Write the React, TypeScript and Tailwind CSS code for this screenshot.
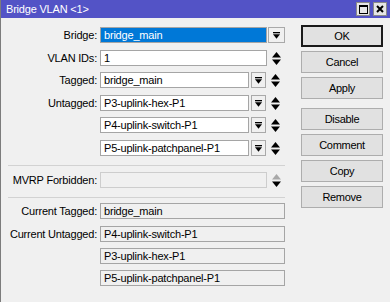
import React from "react";

const font = "font-['Liberation_Sans',Arial,sans-serif] text-[11px] tracking-[-0.2px]";

function DropIcon() {
  return (
    <svg width="7" height="7" viewBox="0 0 7 7" aria-hidden="true">
      <rect x="0" y="0" width="7" height="1.3" fill="#000" />
      <path d="M0 2.2h7L3.5 6.7z" fill="#000" />
    </svg>
  );
}

function UpDown({dim = false}: {dim?: boolean}) {
  return (
    <svg width="9" height="13" viewBox="0 0 9 13" aria-hidden="true" className="ml-[5px] shrink-0">
      <path d="M4.5 0L9 5.5H0z" fill={dim ? "#a8a8a8" : "#000"} />
      <path d="M0 7.5h9L4.5 13z" fill="#000" />
    </svg>
  );
}

function Drop({w = "w-[15px]", ml = "ml-[2px]"}: {w?: string; ml?: string}) {
  return (
    <span className={`${ml} ${w} flex h-[16px] shrink-0 items-center justify-center border border-[#a9a9a9] bg-[#f0f0f0]`}>
      <DropIcon />
    </span>
  );
}

function Row({label, mt, children}: {label?: string; mt: string; children: React.ReactNode}) {
  return (
    <div className={`${mt} flex h-[16px] items-center`}>
      <span className="w-[96px] shrink-0 whitespace-nowrap text-right">{label}</span>
      <div className="ml-[3px] flex items-center">{children}</div>
    </div>
  );
}

function Field({value, w, kind = "edit"}: {value: string; w: string; kind?: "edit" | "selected" | "readonly" | "disabled"}) {
  const look = {
    edit: "border-[#a5a5a5] bg-white text-black",
    selected: "border-[#a5a5a5] bg-[#0078d7] text-white",
    readonly: "border-[#a5a5a5] bg-[#f0f0f0] text-black",
    disabled: "border-[#cdcdcd] bg-[#f0f0f0] text-black",
  }[kind];
  return (
    <div className={`${w} ${look} h-[16px] shrink-0 overflow-hidden whitespace-nowrap border pl-[3px] leading-[14px]`}>
      {value}
    </div>
  );
}

function Sep({mt}: {mt: string}) {
  return <div className={`${mt} ml-[7px] h-px w-[277px] bg-[#d2d2d2]`} />;
}

function Btn({label, mt, primary = false}: {label: string; mt: string; primary?: boolean}) {
  return (
    <div
      className={`${mt} flex h-[22px] items-center justify-center bg-[#e1e1e1] ${
        primary ? "border-2 border-[#1a1a1a]" : "border border-[#adadad]"
      }`}
    >
      {label}
    </div>
  );
}

export default function App() {
  return (
    <div className={`${font} h-[302px] w-[390px] overflow-hidden border-l border-[#7c7c7c] bg-[#f0f0f0] text-black`}>
      <div className="flex h-[18px] items-center justify-between bg-[#5353c6] pl-[5px] pr-[3px]">
        <span className="text-white">Bridge VLAN &lt;1&gt;</span>
        <div className="flex gap-[3px]">
          <span className="flex h-[14px] w-[14px] items-center justify-center border border-[#8a8a8a] bg-[#e6e6e6]">
            <span className="h-[9px] w-[9px] border border-t-2 border-black" />
          </span>
          <span className="flex h-[14px] w-[14px] items-center justify-center border border-[#8a8a8a] bg-[#e6e6e6]">
            <svg width="8" height="8" viewBox="0 0 8 8" aria-hidden="true">
              <path d="M1 1L7 7M7 1L1 7" stroke="#000" strokeWidth="2" />
            </svg>
          </span>
        </div>
      </div>

      <div className="flex">
        <div className="w-[300px] shrink-0">
          <Row label="Bridge:" mt="mt-[9px]">
            <Field value="bridge_main" w="w-[167px]" kind="selected" />
            <Drop w="w-[17px]" ml="ml-[1px]" />
          </Row>
          <Row label="VLAN IDs:" mt="mt-[7px]">
            <Field value="1" w="w-[167px]" />
            <UpDown />
          </Row>
          <Row label="Tagged:" mt="mt-[6px]">
            <Field value="bridge_main" w="w-[149px]" />
            <Drop />
            <UpDown />
          </Row>
          <Row label="Untagged:" mt="mt-[7px]">
            <Field value="P3-uplink-hex-P1" w="w-[149px]" />
            <Drop />
            <UpDown />
          </Row>
          <Row mt="mt-[6px]">
            <Field value="P4-uplink-switch-P1" w="w-[149px]" />
            <Drop />
            <UpDown />
          </Row>
          <Row mt="mt-[7px]">
            <Field value="P5-uplink-patchpanel-P1" w="w-[149px]" />
            <Drop />
            <UpDown />
          </Row>

          <Sep mt="mt-[9px]" />

          <Row label="MVRP Forbidden:" mt="mt-[6px]">
            <Field value="" w="w-[167px]" kind="disabled" />
            <UpDown dim />
          </Row>

          <Sep mt="mt-[9px]" />

          <Row label="Current Tagged:" mt="mt-[5px]">
            <Field value="bridge_main" w="w-[185px]" kind="readonly" />
          </Row>
          <Row label="Current Untagged:" mt="mt-[7px]">
            <Field value="P4-uplink-switch-P1" w="w-[185px]" kind="readonly" />
          </Row>
          <Row mt="mt-[6px]">
            <Field value="P3-uplink-hex-P1" w="w-[185px]" kind="readonly" />
          </Row>
          <Row mt="mt-[6px]">
            <Field value="P5-uplink-patchpanel-P1" w="w-[185px]" kind="readonly" />
          </Row>
        </div>

        <div className="w-[82px] shrink-0 tracking-[-0.3px]">
          <Btn label="OK" mt="mt-[7px]" primary />
          <Btn label="Cancel" mt="mt-[4px]" />
          <Btn label="Apply" mt="mt-[4px]" />
          <Btn label="Disable" mt="mt-[9px]" />
          <Btn label="Comment" mt="mt-[4px]" />
          <Btn label="Copy" mt="mt-[4px]" />
          <Btn label="Remove" mt="mt-[4px]" />
        </div>
      </div>
    </div>
  );
}
